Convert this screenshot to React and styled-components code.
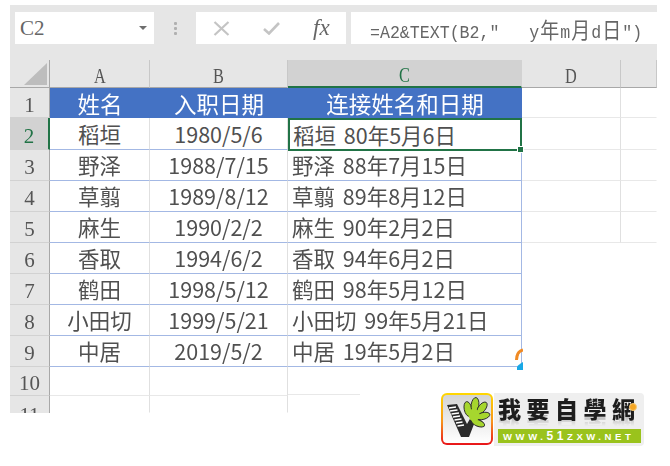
import React from 'react';
import styled, { createGlobalStyle } from 'styled-components';

const GlobalStyle = createGlobalStyle`
  html, body {
    margin: 0;
    padding: 0;
    background: #fff;
  }
`;

const CJK = '"Noto Sans CJK SC", "Noto Sans", sans-serif';
const BLUE_LINE = '#a3b8e4';
const GREY_LINE = '#e0e0e0';
const GREEN = '#217346';
const COLUMNS = '40px 100px 138px 234px 99px 36px';

const Page = styled.div`
  position: relative;
  width: 670px;
  height: 466px;
  padding: 5px 13px 0 10px;
  box-sizing: border-box;
  overflow: hidden;
  filter: blur(0.45px);
`;

const Toolbar = styled.div`
  height: 55px;
  box-sizing: border-box;
  padding: 7px 0 16px 5px;
  background: #e6e6e6;
  display: flex;
  align-items: stretch;
`;

const NameBox = styled.div`
  width: 139px;
  background: #fff;
  display: flex;
  align-items: center;
  justify-content: space-between;
  padding: 0 7px 0 5px;
  box-sizing: border-box;
  font-family: "Liberation Serif", serif;
  font-size: 21px;
  color: #666;
`;

const DropArrow = styled.span`
  width: 0;
  height: 0;
  border-left: 4px solid transparent;
  border-right: 4px solid transparent;
  border-top: 4px solid #6e6e6e;
`;

const Grip = styled.div`
  width: 42px;
  display: flex;
  flex-direction: column;
  align-items: center;
  justify-content: center;
  gap: 2px;
  span {
    width: 3px;
    height: 3px;
    background: #b0b0b0;
    border-radius: 1px;
  }
`;

const FxBox = styled.div`
  width: 150px;
  background: #fff;
  display: flex;
  align-items: center;
  padding-left: 17px;
  box-sizing: border-box;
  gap: 33px;
  i {
    font-family: "Liberation Serif", serif;
    font-size: 23px;
    color: #666;
  }
`;

const FormulaBox = styled.div`
  flex: 1;
  margin-left: 5px;
  background: #fff;
  padding-left: 19px;
  display: flex;
  align-items: center;
  font-family: "Liberation Mono", monospace;
  font-size: 16.6px;
  color: #666;
`;

const FormulaText = styled.span`
  white-space: pre;
  transform: scaleY(1.14);
  b {
    font-family: ${CJK};
    font-weight: 400;
    font-size: 19px;
    margin: 0 1px;
  }
`;

const Row = styled.div`
  display: grid;
  grid-template-columns: ${COLUMNS};
  grid-template-rows: minmax(0, 1fr);
  height: ${p => p.$h}px;
`;

const ColHead = styled.div`
  background: ${p => (p.$active ? '#d2d2d2' : '#e6e6e6')};
  box-sizing: border-box;
  padding-top: 4px;
  border-right: 1px solid ${p => (p.$active ? '#d2d2d2' : '#c8c8c8')};
  border-bottom: ${p => (p.$active ? `2px solid ${GREEN}` : '1px solid #a8a8a8')};
  display: flex;
  align-items: center;
  justify-content: center;
  color: ${p => (p.$active ? GREEN : '#555')};
  font-family: "Liberation Serif", serif;
  font-size: 22px;
  line-height: 1;
  span {
    transform: scaleX(0.74);
  }
`;

const Corner = styled(ColHead)`
  align-items: flex-end;
  justify-content: flex-end;
  padding: 0 2px 2px 0;
  border-right: 1px solid #a8a8a8;
  svg {
    display: block;
  }
`;

const RowHead = styled.div`
  background: ${p => (p.$active ? '#d2d2d2' : '#e6e6e6')};
  box-sizing: border-box;
  border-right: ${p => (p.$active ? `2px solid ${GREEN}` : '1px solid #a8a8a8')};
  border-bottom: ${p => (p.$clipped ? 'none' : '1px solid #d2d2d2')};
  display: flex;
  align-items: ${p => (p.$clipped ? 'flex-start' : 'center')};
  padding-top: ${p => (p.$clipped ? '9px' : '5px')};
  justify-content: center;
  color: ${p => (p.$active ? GREEN : '#555')};
  font-family: "Liberation Serif", serif;
  font-size: 21px;
  line-height: 1;
  overflow: hidden;
`;

const Cell = styled.div`
  box-sizing: border-box;
  min-height: 0;
  background: #fff;
  border-right: 1px solid ${p => (p.$edge ? BLUE_LINE : p.$noRight ? 'transparent' : GREY_LINE)};
  border-bottom: 1px solid ${p => (p.$blue ? BLUE_LINE : p.$noBottom ? 'transparent' : '#e8e8e8')};
  display: flex;
  align-items: center;
  justify-content: ${p => (p.$left ? 'flex-start' : 'center')};
  padding-left: ${p => (p.$left ? '4px' : '0')};
  color: #505050;
  font-family: ${CJK};
  font-size: 21.5px;
  line-height: 1;
  word-spacing: ${p => (p.$left ? '3px' : '0')};
  white-space: nowrap;
`;

const Banner = styled.div`
  background: #4472c4;
  display: flex;
  align-items: center;
  justify-content: center;
  color: #fff;
  font-family: ${CJK};
  font-size: 22.5px;
  line-height: 1;
`;

const Selected = styled(Cell)`
  position: relative;
  align-self: start;
  height: 33px;
  border: 2px solid ${GREEN};
  padding-left: 3px;
  z-index: 1;
`;

const Handle = styled.span`
  position: absolute;
  right: -4px;
  bottom: -4px;
  width: 5px;
  height: 5px;
  background: ${GREEN};
  border: 1px solid #fff;
`;

// the grid line under row 10 stops part way through column C in the picture
const ShortLineCell = styled(Cell)`
  border-bottom-color: transparent;
  border-right-color: transparent;
  background: linear-gradient(#e8e8e8, #e8e8e8) left bottom / 72px 1px no-repeat;
`;

const Swirl = styled.svg`
  position: absolute;
  left: 513px;
  top: 348px;
`;

const Logo = styled.div`
  position: absolute;
  left: 441px;
  top: 393px;
  width: 197px;
  height: 53px;
  display: flex;
  background: #fff;
`;

const Badge = styled.div`
  width: 52px;
  height: 52px;
  box-sizing: border-box;
  padding: 2px;
  border-radius: 6px;
  background: linear-gradient(to bottom, #ffd800, #f7941d 55%, #e8131a);
  svg {
    display: block;
    border-radius: 4px;
  }
`;

const LogoBody = styled.div`
  position: relative;
  flex: 1;
  margin-left: 1px;
  padding: 4px 3px 3px 4px;
  background: #efefef;
  border-radius: 0 4px 4px 0;
  display: flex;
  flex-direction: column;
  justify-content: space-between;
`;

const LogoTitle = styled.div`
  font-family: ${CJK};
  font-weight: 900;
  font-size: 23px;
  line-height: 22px;
  letter-spacing: 5.5px;
  color: #1d1d1d;
  white-space: nowrap;
  -webkit-box-reflect: below -4px linear-gradient(transparent 50%, rgba(0, 0, 0, 0.3));
`;

const LogoDot = styled.span`
  position: absolute;
  right: 7px;
  top: 10px;
  width: 8px;
  height: 8px;
  border-radius: 50%;
  background: #f5a623;
  border: 1px solid #f7c873;
  box-sizing: border-box;
`;

const LogoUrl = styled.div`
  height: 14px;
  background: #9ac31c;
  color: #fff;
  font-family: "Liberation Sans", sans-serif;
  font-weight: 700;
  font-size: 9.5px;
  line-height: 14px;
  letter-spacing: 3.6px;
  padding-left: 5px;
  white-space: nowrap;
  em {
    font-style: normal;
    font-size: 12px;
  }
`;

const rows = [
  ['稻垣', '1980/5/6', '稻垣 80年5月6日'],
  ['野泽', '1988/7/15', '野泽 88年7月15日'],
  ['草翦', '1989/8/12', '草翦 89年8月12日'],
  ['麻生', '1990/2/2', '麻生 90年2月2日'],
  ['香取', '1994/6/2', '香取 94年6月2日'],
  ['鹤田', '1998/5/12', '鹤田 98年5月12日'],
  ['小田切', '1999/5/21', '小田切 99年5月21日'],
  ['中居', '2019/5/2', '中居 19年5月2日'],
];

const App = () => {
  return (
    <Page>
      <GlobalStyle />
      <Toolbar>
        <NameBox>
          C2
          <DropArrow />
        </NameBox>
        <Grip>
          <span />
          <span />
          <span />
        </Grip>
        <FxBox>
          <svg width="17" height="15" viewBox="0 0 17 15">
            <path d="M1.5 1 L15.5 14 M15.5 1 L1.5 14" stroke="#c4c4c4" strokeWidth="2.2" fill="none" />
          </svg>
          <svg width="17" height="13" viewBox="0 0 17 13">
            <path d="M1 7 L6 11.5 L16 1" stroke="#c4c4c4" strokeWidth="2.6" fill="none" />
          </svg>
          <i>fx</i>
        </FxBox>
        <FormulaBox>
          <FormulaText>
            =A2&amp;TEXT(B2,″   y<b>年</b>m<b>月</b>d<b>日</b>″)
          </FormulaText>
        </FormulaBox>
      </Toolbar>

      <Row $h={28}>
        <Corner>
          <svg width="23" height="22" viewBox="0 0 23 22">
            <path d="M23 0 V22 H0 Z" fill="#bdbdbd" />
          </svg>
        </Corner>
        <ColHead><span>A</span></ColHead>
        <ColHead><span>B</span></ColHead>
        <ColHead $active><span>C</span></ColHead>
        <ColHead><span>D</span></ColHead>
        <ColHead />
      </Row>

      <Row $h={30}>
        <RowHead>1</RowHead>
        <Banner>姓名</Banner>
        <Banner>入职日期</Banner>
        <Banner>连接姓名和日期</Banner>
        <Cell />
        <Cell $noRight />
      </Row>

      {rows.map((r, i) => {
        const active = i === 0;
        const blank = i > 3;
        return (
          <Row key={r[0]} $h={active ? 32 : 31}>
            <RowHead $active={active}>{i + 2}</RowHead>
            <Cell $blue>{r[0]}</Cell>
            <Cell $blue>{r[1]}</Cell>
            {active ? (
              <Selected $left>
                {r[2]}
                <Handle />
              </Selected>
            ) : (
              <Cell $blue $edge $left>{r[2]}</Cell>
            )}
            <Cell $noRight={blank} $noBottom={blank} />
            <Cell $noRight $noBottom={blank} />
          </Row>
        );
      })}

      <Row $h={29}>
        <RowHead>10</RowHead>
        <Cell />
        <Cell />
        <ShortLineCell />
      </Row>
      <Row $h={17}>
        <RowHead $clipped>11</RowHead>
        <Cell $noBottom />
        <Cell $noBottom />
      </Row>

      <Swirl width="10" height="22" viewBox="0 0 10 22">
        <path d="M10 2 C6 3 3.5 6 3.5 12" stroke="#f08a24" strokeWidth="3" fill="none" />
        <path d="M4 22 L4 19 Q6 16 10 14 L10 22 Z" fill="#19a8e6" />
      </Swirl>

      <Logo>
        <Badge>
          <svg width="48" height="48" viewBox="0 0 48 48">
            <defs>
              <linearGradient id="badgeFill" x1="0" y1="0" x2="0" y2="1">
                <stop offset="0" stopColor="#d4d4d4" />
                <stop offset="1" stopColor="#ffffff" />
              </linearGradient>
            </defs>
            <rect width="48" height="48" fill="url(#badgeFill)" />
            <path d="M4 10 L14 9 L24 29 L28 22 L33 24 L26 42 L18 42 Z" fill="#2b2b2b" />
            <path d="M6 13 L13 12 M7 16 L14.5 15 M8.5 19 L16 18 M10 22 L17 21 M11.5 25 L18.5 24 M13 28 L19.5 27 M14.5 31 L21 30" stroke="#fff" strokeWidth="1.5" />
            <g fill="#a6d62e" stroke="#2b2b2b" strokeWidth="0.9">
              <ellipse cx="25" cy="14" rx="3.8" ry="7.5" transform="rotate(-12 25 14)" />
              <ellipse cx="32" cy="10" rx="3.8" ry="7.5" transform="rotate(8 32 10)" />
              <ellipse cx="39" cy="13" rx="3.6" ry="7" transform="rotate(38 39 13)" />
              <ellipse cx="40" cy="21" rx="3.4" ry="7" transform="rotate(75 40 21)" />
              <ellipse cx="35" cy="28" rx="3.2" ry="7" transform="rotate(112 35 28)" />
              <ellipse cx="31" cy="20" rx="5.5" ry="6.5" stroke="none" />
            </g>
          </svg>
        </Badge>
        <LogoBody>
          <LogoTitle>我要自學網</LogoTitle>
          <LogoDot />
          <LogoUrl>WWW.<em>51</em>ZXW.NET</LogoUrl>
        </LogoBody>
      </Logo>
    </Page>
  );
};

export default App;
